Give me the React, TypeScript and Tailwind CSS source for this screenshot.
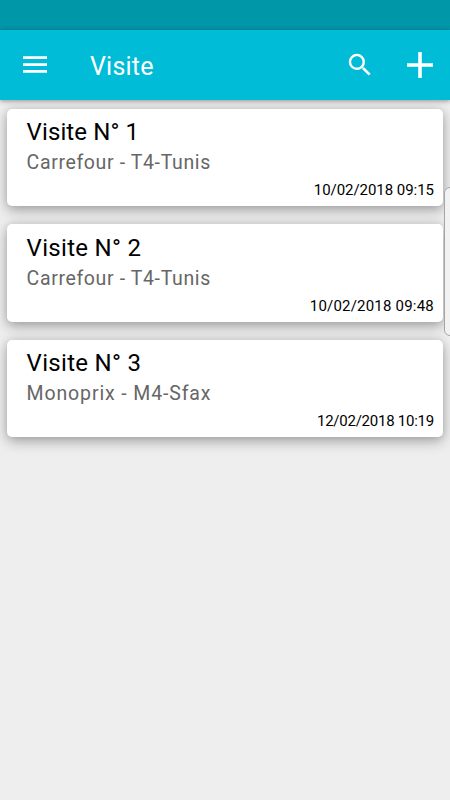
import { clsx } from "clsx";

type Visit = {
  id: number;
  place: string;
  date: string;
  titleClass: string;
  placeClass: string;
  dateClass: string;
};

const visits: Visit[] = [
  {
    id: 1,
    place: "Carrefour - T4-Tunis",
    date: "10/02/2018 09:15",
    titleClass: "tracking-[0.1px]",
    placeClass: "tracking-[0.63px]",
    dateClass: "tracking-[-0.05px]",
  },
  {
    id: 2,
    place: "Carrefour - T4-Tunis",
    date: "10/02/2018 09:48",
    titleClass: "tracking-[0.3px]",
    placeClass: "tracking-[0.63px]",
    dateClass: "tracking-[0.2px]",
  },
  {
    id: 3,
    place: "Monoprix - M4-Sfax",
    date: "12/02/2018 10:19",
    titleClass: "tracking-[0.3px]",
    placeClass: "tracking-[0.87px]",
    dateClass: "tracking-[-0.25px]",
  },
];

function Toolbar() {
  return (
    <header className="relative z-10 flex h-[70px] items-center bg-[#00bcd6] text-white shadow-[0_1px_5px_rgba(0,0,0,0.4)]">
      <svg className="ml-[23px] h-[18px] w-6" viewBox="0 0 24 18" fill="currentColor">
        <path d="M0 .3h24v2.7H0zM0 7.2h24v2.7H0zM0 14.1h24v2.7H0z" />
      </svg>
      <h1 className="mt-1 ml-[43px] text-[25px] leading-[30px] tracking-[0.2px]">Visite</h1>
      <button className="ml-auto" aria-label="Rechercher">
        <svg className="h-[30px] w-[30px]" viewBox="0 0 24 24" fill="currentColor">
          <path d="M15.5 14h-.79l-.28-.27A6.471 6.471 0 0 0 16 9.5 6.5 6.5 0 1 0 9.5 16c1.61 0 3.09-.59 4.23-1.57l.27.28v.79l5 4.99L20.49 19l-4.99-5zm-6 0C7.01 14 5 11.99 5 9.5S7.01 5 9.5 5 14 7.01 14 9.5 11.99 14 9.5 14z" />
        </svg>
      </button>
      <button className="mr-[17px] ml-[32px]" aria-label="Ajouter">
        <svg className="h-[26px] w-[26px]" viewBox="0 0 26 26" fill="currentColor">
          <path d="M11.2 0h3.6v11.2H26v3.6H14.8V26h-3.6V14.8H0v-3.6h11.2z" />
        </svg>
      </button>
    </header>
  );
}

function VisitCard({ visit }: { visit: Visit }) {
  return (
    <li className="flex h-[97.4px] flex-col rounded-[5px] bg-white pr-[9.5px] pl-5 shadow-[0_5px_13px_rgba(0,0,0,0.27),0_0_8px_rgba(0,0,0,0.13)]">
      <h2 className={clsx("mt-[8.2px] text-2xl leading-[30px] text-black", visit.titleClass)}>
        Visite N° {visit.id}
      </h2>
      <p className={clsx("mt-px text-[19.5px] leading-[30px] text-[#666]", visit.placeClass)}>
        {visit.place}
      </p>
      <time className={clsx("mt-[2px] self-end text-[15px] leading-5 text-black", visit.dateClass)}>
        {visit.date}
      </time>
    </li>
  );
}

export default function App() {
  return (
    <div className="relative flex h-[800px] w-[450px] flex-col overflow-hidden bg-[#eeeeee] font-['Roboto','Liberation_Sans',sans-serif]">
      <div className="h-[30px] shrink-0 bg-[#0097a8]" />
      <Toolbar />
      <ul className="flex flex-col gap-[18px] px-[6.6px] pt-[9px]">
        {visits.map((visit) => (
          <VisitCard key={visit.id} visit={visit} />
        ))}
      </ul>
      {/* edge panel handle */}
      <div className="absolute top-[187px] -right-[6px] h-[149px] w-3 rounded-[6px] border border-[#a5a5a5] bg-[#f2f2f2]" />
    </div>
  );
}
